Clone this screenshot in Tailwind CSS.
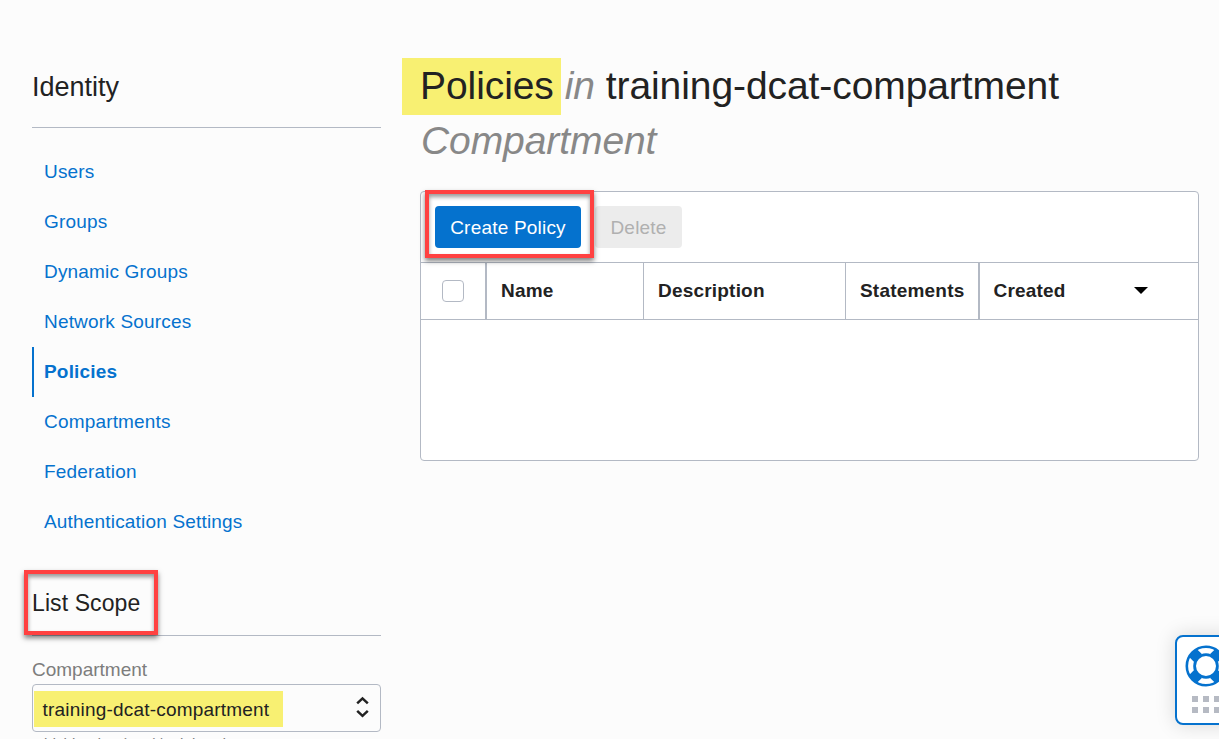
<!DOCTYPE html>
<html lang="en"><head><meta charset="utf-8"><title>Policies</title>
<script src="https://cdn.jsdelivr.net/npm/@tailwindcss/browser@4"></script></head>
<body class="h-screen overflow-hidden bg-[#fcfcfc] text-[#222] font-['Liberation_Sans',Arial,sans-serif]">
<div class="relative flex h-[739px] w-[1219px] overflow-hidden">
  <aside class="ml-8 w-[349px] shrink-0 pt-[72px]">
    <h2 class="h-[56px] border-b border-[#b3b9c4] text-[27px] leading-[31px]">Identity</h2>
    <nav class="mt-[19px] flex flex-col text-[19px] leading-[50px] tracking-[0.18px] text-[#0572ce]">
      <a class="h-[50px] pl-3">Users</a>
      <a class="h-[50px] pl-3">Groups</a>
      <a class="h-[50px] pl-3">Dynamic Groups</a>
      <a class="h-[50px] pl-3">Network Sources</a>
      <a class="h-[50px] border-l-2 border-[#0572ce] pl-2.5 font-bold">Policies</a>
      <a class="h-[50px] pl-3">Compartments</a>
      <a class="h-[50px] pl-3">Federation</a>
      <a class="h-[50px] pl-3">Authentication Settings</a>
    </nav>
    <h2 class="relative mt-[23px] h-[66px] border-b border-[#b3b9c4] pt-[18px] text-[23px] leading-[31px] tracking-[0.1px]">List Scope
      <span class="absolute -left-2 top-0 h-[65px] w-[134px] border-4 border-[#ff4141] shadow-[0_3px_5px_rgba(0,0,0,0.5),inset_0_3px_4px_rgba(0,0,0,0.4)]"></span>
    </h2>
    <label class="mt-[21px] block h-[27px] text-[19px] leading-[26px] text-[#7d7d7d]">Compartment</label>
    <div class="flex h-[48px] items-center justify-between rounded-[4px] border border-[#b3b9c4] pl-px pr-[11px]">
      <span class="mt-0.5 h-9 w-[249px] bg-[#f8f072] pl-[8.5px] pt-px text-[19px] leading-[36px] tracking-[0.2px]">training-dcat-compartment</span>
      <svg class="mb-0.5 h-[22px] w-[13px]" viewBox="0 0 13 22" fill="none" stroke="#222" stroke-width="2.5"><path d="M1.2 7.4 6.5 2.4 11.8 7.4M1.2 14.8 6.5 19.8 11.8 14.8"/></svg>
    </div>
    <p class="pl-3 pt-[3px] text-[15.3px] leading-[18px] whitespace-nowrap text-[#7d7d7d]">idcbinodev (root)/training-dcat-compartment</p>
  </aside>
  <main class="ml-[39px] w-[779px] pt-[58px]">
    <h1 class="text-[39px] leading-[55px] tracking-[-0.08px]"><span class="-mb-0.5 -ml-[18px] -mr-[7px] inline-block h-[57px] w-[159px] bg-[#f8f072] pl-[18px] align-top">Policies</span> <i class="text-[#888]">in</i> training-dcat-compartment<br><i class="pl-px text-[#888]">Compartment</i></h1>
    <section class="mt-[23px] h-[270px] rounded-[4px] border border-[#b3b9c4] bg-white">
      <div class="flex h-[70px] items-center gap-3.5 pl-3.5 text-[19px] tracking-[0.2px]">
        <button class="relative h-[42px] w-[146px] rounded-[4px] bg-[#0572ce] pt-0.5 text-white">Create Policy
          <span class="absolute -left-[10px] -top-[16px] h-[68px] w-[169px] border-4 border-[#ff4141] shadow-[0_3px_5px_rgba(0,0,0,0.5),inset_0_3px_4px_rgba(0,0,0,0.4)]"></span></button>
        <button class="h-[42px] w-[87px] rounded-[4px] bg-[#ececec] pt-0.5 text-[#b0b0b0]">Delete</button>
      </div>
      <div class="flex h-[58px] border-y border-[#b3b9c4] text-[19px] leading-[55px] font-bold tracking-[0.2px]">
        <div class="flex w-[66px] items-center border-r-2 border-[#b3b9c4] pl-[21px]"><span class="size-[22px] rounded-[4px] border border-[#b3b9c4]"></span></div>
        <div class="w-[157px] border-r border-[#b3b9c4] pl-3.5">Name</div>
        <div class="w-[202px] border-r border-[#b3b9c4] pl-3.5">Description</div>
        <div class="w-[134px] border-r-2 border-[#b3b9c4] pl-3.5">Statements</div>
        <div class="flex flex-1 items-start justify-between pl-[13.5px] pr-[50px]">Created<svg class="mt-[24px] h-[7px] w-[14px]" viewBox="0 0 14 7"><path d="M0 0H14L7 7Z"/></svg></div>
      </div>
    </section>
  </main>
  <div class="absolute left-[1175px] top-[635px] h-[90px] w-[64px] rounded-[8px] border-2 border-[#0572ce] bg-white shadow-[0_0_20px_rgba(0,0,0,0.15)]">
    <svg class="absolute left-2 top-2 size-[42px]" viewBox="0 0 42 42" fill="none" stroke="#0572ce"><circle cx="21" cy="21" r="19.2" stroke-width="2.6"/><circle cx="21" cy="21" r="11.4" stroke-width="2.8"/><path stroke-width="11" d="M13 13 7.8 7.8M29 13 34.2 7.8M13 29 7.8 34.2M29 29 34.2 34.2"/></svg>
    <svg class="absolute left-[15px] top-[59px] h-[17px] w-[40px]" viewBox="0 0 40 17" fill="#b6bac3"><path d="M0 0h6v6H0zM11 0h6v6h-6zM22 0h6v6h-6zM33 0h6v6h-6zM0 11h6v6H0zM11 11h6v6h-6zM22 11h6v6h-6zM33 11h6v6h-6z"/></svg>
  </div>
</div>
</body></html>
